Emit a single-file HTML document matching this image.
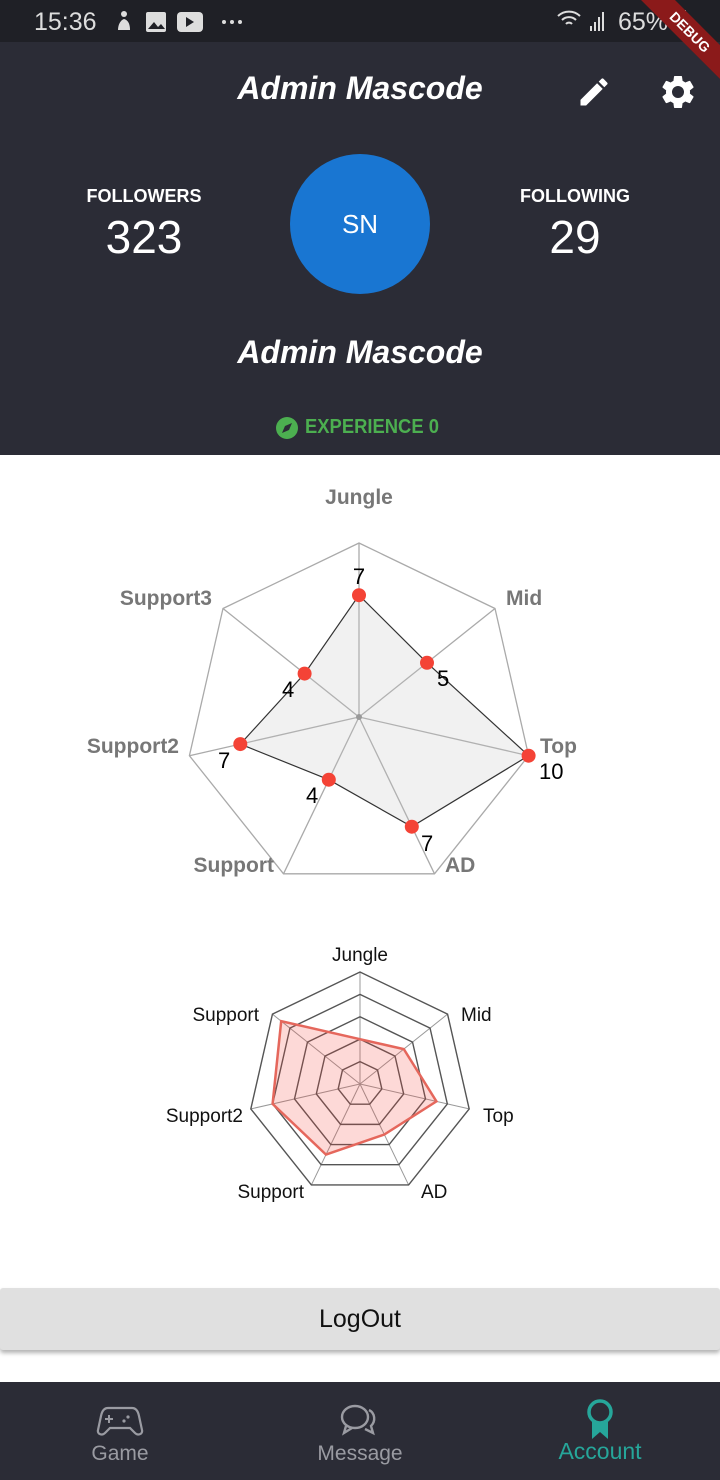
<!DOCTYPE html>
<html><head><meta charset="utf-8"><style>
*{margin:0;padding:0;box-sizing:border-box}
body{width:720px;height:1480px;overflow:hidden;background:#fff;font-family:"Liberation Sans",sans-serif;position:relative}
.abs{position:absolute}
.status{left:0;top:0;width:720px;height:42px;background:#1f2026}
.head{left:0;top:42px;width:720px;height:413px;background:#2b2c36}
.t{color:#fff;white-space:nowrap}
</style></head><body>
<div class="abs status"></div>
<div class="abs t" style="left:34px;top:8px;font-size:25px;color:#ddd">15:36</div>
<svg class="abs" style="left:112px;top:8px" width="140" height="28">
<circle cx="12" cy="6" r="3" fill="#ddd"/><path d="M6 22c0-6 3-10 6-11 4 1 6 5 6 11z" fill="#ddd"/>
<rect x="34" y="4" width="20" height="20" rx="2" fill="#ddd"/><path d="M36 21l6-7 4 5 3-3 4 5z" fill="#1f2026"/>
<rect x="65" y="4" width="26" height="20" rx="4" fill="#ddd"/><path d="M74 9l8 5-8 5z" fill="#1f2026"/>
<circle cx="112" cy="14" r="2" fill="#ddd"/><circle cx="120" cy="14" r="2" fill="#ddd"/><circle cx="128" cy="14" r="2" fill="#ddd"/>
</svg>
<svg class="abs" style="left:556px;top:8px" width="56" height="26"><path d="M2 8a16 16 0 0 1 22 0M6 12a10 10 0 0 1 14 0M10 16a4 4 0 0 1 6 0" stroke="#ddd" stroke-width="2" fill="none"/><rect x="34" y="18" width="2" height="5" fill="#ddd"/><rect x="38" y="14" width="2" height="9" fill="#ddd"/><rect x="42" y="9" width="2" height="14" fill="#ddd"/><rect x="46" y="4" width="2" height="19" fill="#ddd"/></svg>
<div class="abs t" style="left:618px;top:8px;font-size:25px;color:#ddd">65%</div>
<div class="abs" style="left:674px;top:10px;width:12px;height:22px;background:#aaa"></div>
<div class="abs head"></div>
<div class="abs" style="left:610px;top:20px;width:160px;height:24px;background:#8b1a1a;transform:rotate(45deg);color:#fff;font-size:14px;font-weight:bold;text-align:center;line-height:24px">DEBUG</div>
<div class="abs t" style="left:0;width:720px;top:70px;text-align:center;font-size:32px;font-weight:bold;font-style:italic">Admin Mascode</div>
<svg class="abs" style="left:576px;top:74px" width="36" height="36" viewBox="0 0 24 24"><path fill="#fff" d="M3 17.25V21h3.75L17.81 9.94l-3.75-3.75zM20.71 7.04a1 1 0 0 0 0-1.41l-2.340-2.34a1 1 0 0 0-1.41 0l-1.83 1.83 3.75 3.75z"/></svg>
<svg class="abs" style="left:658px;top:72px" width="40" height="40" viewBox="0 0 24 24"><path fill="#fff" d="M19.14 12.94c.04-.3.06-.61.06-.94 0-.32-.02-.64-.07-.94l2.03-1.58a.49.49 0 0 0 .12-.61l-1.92-3.32a.49.49 0 0 0-.59-.22l-2.39.96c-.5-.38-1.030-.7-1.62-.94l-.36-2.54a.48.48 0 0 0-.48-.41h-3.84a.47.47 0 0 0-.47.41l-.36 2.54c-.59.24-1.13.57-1.62.94l-2.39-.96a.48.48 0 0 0-.59.22L2.74 8.87a.47.47 0 0 0 .12.61l2.03 1.58c-.05.3-.09.63-.09.94s.02.64.07.94l-2.03 1.58a.49.49 0 0 0-.12.61l1.92 3.32c.12.22.37.29.59.22l2.39-.96c.5.38 1.03.7 1.62.94l.36 2.54c.05.24.24.41.48.41h3.84c.24 0 .44-.17.47-.41l.36-2.54c.59-.24 1.13-.56 1.62-.94l2.39.96c.22.08.47 0 .59-.22l1.92-3.32a.47.47 0 0 0-.12-.61zM12 15.6A3.6 3.6 0 1 1 12 8.4a3.6 3.6 0 0 1 0 7.2z"/></svg>
<div class="abs t" style="left:64px;width:160px;top:186px;text-align:center;font-size:18px;font-weight:bold">FOLLOWERS</div>
<div class="abs t" style="left:64px;width:160px;top:210px;text-align:center;font-size:46px">323</div>
<div class="abs t" style="left:495px;width:160px;top:186px;text-align:center;font-size:18px;font-weight:bold">FOLLOWING</div>
<div class="abs t" style="left:495px;width:160px;top:210px;text-align:center;font-size:46px">29</div>
<div class="abs" style="left:290px;top:154px;width:140px;height:140px;border-radius:50%;background:#1976d2;color:#fff;font-size:26px;text-align:center;line-height:140px">SN</div>
<div class="abs t" style="left:0;width:720px;top:334px;text-align:center;font-size:32px;font-weight:bold;font-style:italic">Admin Mascode</div>
<svg class="abs" style="left:275px;top:416px" width="24" height="24" viewBox="0 0 24 24"><circle cx="12" cy="12" r="11" fill="#4caf50"/><path d="M17 7l-3 7-7 3 3-7z" fill="#2b2c36"/></svg>
<div class="abs" style="left:305px;top:416px;font-size:20px;font-weight:bold;color:#4caf50;transform:scaleX(0.92);transform-origin:left">EXPERIENCE 0</div>

<svg class="abs" style="left:0;top:0" width="720" height="1480">
<g font-family="Liberation Sans,sans-serif">
<g transform="translate(359 717)">
<polygon points="0,-174 136.0,-108.5 169.6,38.7 75.5,156.8 -75.5,156.8 -169.6,38.7 -136.0,-108.5" fill="none" stroke="#aaa" stroke-width="1.3"/>
<g stroke="#aaa" stroke-width="1.3"><line x1="0" y1="0" x2="0" y2="-174"/><line x1="0" y1="0" x2="136" y2="-108.5"/><line x1="0" y1="0" x2="169.6" y2="38.7"/><line x1="0" y1="0" x2="75.5" y2="156.8"/><line x1="0" y1="0" x2="-75.5" y2="156.8"/><line x1="0" y1="0" x2="-169.6" y2="38.7"/><line x1="0" y1="0" x2="-136" y2="-108.5"/></g>
</g>
<polygon points="359,595.2 427,662.8 528.6,755.7 411.8,826.7 328.8,779.7 240.3,744.1 304.6,673.6" fill="rgba(200,200,200,0.25)" stroke="#333" stroke-width="1.2"/>
<circle cx="359" cy="717" r="3" fill="#999"/>
<g fill="#f44336"><circle cx="359" cy="595.2" r="7"/><circle cx="427" cy="662.8" r="7"/><circle cx="528.6" cy="755.7" r="7"/><circle cx="411.8" cy="826.7" r="7"/><circle cx="328.8" cy="779.7" r="7"/><circle cx="240.3" cy="744.1" r="7"/><circle cx="304.6" cy="673.6" r="7"/></g>
<g font-size="21" font-weight="bold" fill="#777">
<text x="359" y="504" text-anchor="middle">Jungle</text>
<text x="506" y="605">Mid</text>
<text x="540" y="753">Top</text>
<text x="445" y="872">AD</text>
<text x="274" y="872" text-anchor="end">Support</text>
<text x="179" y="753" text-anchor="end">Support2</text>
<text x="212" y="605" text-anchor="end">Support3</text>
</g>
<g font-size="22" fill="#000">
<text x="359" y="584" text-anchor="middle">7</text>
<text x="437" y="686">5</text>
<text x="539" y="779">10</text>
<text x="421" y="851">7</text>
<text x="306" y="803">4</text>
<text x="218" y="768">7</text>
<text x="282" y="697">4</text>
</g>

<g transform="translate(360 1084)">
<g stroke="#999" stroke-width="1"><line x1="0" y1="0" x2="0" y2="-112"/><line x1="0" y1="0" x2="87.56" y2="-69.83"/><line x1="0" y1="0" x2="109.19" y2="24.92"/><line x1="0" y1="0" x2="48.6" y2="100.91"/><line x1="0" y1="0" x2="-48.6" y2="100.91"/><line x1="0" y1="0" x2="-109.19" y2="24.92"/><line x1="0" y1="0" x2="-87.56" y2="-69.83"/></g>
<g fill="none" stroke="#555" stroke-width="1.4">
<polygon vector-effect="non-scaling-stroke" transform="scale(0.2)" points="0,-112 87.56,-69.83 109.19,24.92 48.6,100.91 -48.6,100.91 -109.19,24.92 -87.56,-69.83"/>
<polygon vector-effect="non-scaling-stroke" transform="scale(0.4)" points="0,-112 87.56,-69.83 109.19,24.92 48.6,100.91 -48.6,100.91 -109.19,24.92 -87.56,-69.83"/>
<polygon vector-effect="non-scaling-stroke" transform="scale(0.6)" points="0,-112 87.56,-69.83 109.19,24.92 48.6,100.91 -48.6,100.91 -109.19,24.92 -87.56,-69.83"/>
<polygon vector-effect="non-scaling-stroke" transform="scale(0.8)" points="0,-112 87.56,-69.83 109.19,24.92 48.6,100.91 -48.6,100.91 -109.19,24.92 -87.56,-69.83"/>
<polygon vector-effect="non-scaling-stroke" points="0,-112 87.56,-69.83 109.19,24.92 48.6,100.91 -48.6,100.91 -109.19,24.92 -87.56,-69.83"/>
</g>
</g>
<polygon points="360,1039.2 403.8,1049.1 436.4,1101.4 384.3,1134.5 326,1154.6 272.6,1103.9 281.2,1021.2" fill="rgba(244,67,54,0.2)" stroke="#e5675c" stroke-width="2.5"/>
<g font-size="19" fill="#111">
<text x="360" y="961" text-anchor="middle">Jungle</text>
<text x="461" y="1021">Mid</text>
<text x="483" y="1122">Top</text>
<text x="421" y="1198">AD</text>
<text x="304" y="1198" text-anchor="end">Support</text>
<text x="243" y="1122" text-anchor="end">Support2</text>
<text x="259" y="1021" text-anchor="end">Support</text>
</g>
</g>
</svg>

<div class="abs" style="left:0;top:1288px;width:720px;height:62px;background:#e0e0e0;border-radius:3px;box-shadow:0 3px 4px rgba(0,0,0,0.3);text-align:center;line-height:62px;font-size:25px;color:#111">LogOut</div>
<div class="abs" style="left:0;top:1382px;width:720px;height:98px;background:#2b2c36"></div>
<svg class="abs" style="left:96px;top:1402px" width="48" height="36" viewBox="0 0 48 36"><path d="M12 6h24c4 0 6 3 7 8l3 14c1 4-4 6-7 3l-5-5H14l-5 5c-3 3-8 1-7-3l3-14c1-5 3-8 7-8z" fill="none" stroke="#9a9ba2" stroke-width="2.2"/><path d="M13 13v8M9 17h8" stroke="#9a9ba2" stroke-width="2"/><circle cx="32" cy="15" r="1.6" fill="#9a9ba2"/><circle cx="28" cy="19" r="1.6" fill="#9a9ba2"/></svg>
<div class="abs" style="left:60px;width:120px;top:1442px;text-align:center;font-size:21px;color:#9a9ba2">Game</div>
<svg class="abs" style="left:338px;top:1402px" width="44" height="38" viewBox="0 0 44 38"><ellipse cx="17" cy="15" rx="13" ry="11" fill="none" stroke="#9a9ba2" stroke-width="2.4"/><path d="M8 24l-2 7 8-5" fill="none" stroke="#9a9ba2" stroke-width="2.4"/><path d="M31 8c6 3 7 11 2 16l2 7-8-4" fill="none" stroke="#9a9ba2" stroke-width="2.4"/></svg>
<div class="abs" style="left:290px;width:140px;top:1442px;text-align:center;font-size:21px;color:#9a9ba2">Message</div>
<svg class="abs" style="left:584px;top:1398px" width="32" height="44" viewBox="0 0 32 44"><circle cx="16" cy="14" r="11" fill="none" stroke="#26a69a" stroke-width="3.5"/><path d="M8 24v17l8-7 8 7V24" fill="#26a69a"/></svg>
<div class="abs" style="left:530px;width:140px;top:1438px;text-align:center;font-size:23px;color:#26a69a">Account</div>
</body></html>
